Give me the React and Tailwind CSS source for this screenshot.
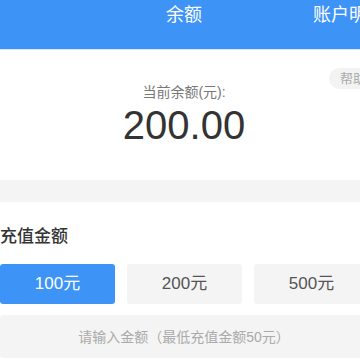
import React, { useState } from 'react';

const amounts = ['100元', '200元', '500元'];

export default function App() {
    const [picked, setPicked] = useState(0);

    return (
        <div className="w-[360px] h-[360px] overflow-hidden bg-white font-['Liberation_Sans','Noto_Sans_CJK_SC',sans-serif]">
            <div className="w-[368px]">
                {/* header */}
                <div className="relative h-[50px] bg-[#3d94f6] border-b border-[#d8e9fd] flex items-start justify-center">
                    <span className="mt-[4px] text-[18px] leading-[22px] text-white">余额</span>
                    <span className="absolute left-[313px] top-[4px] whitespace-nowrap text-[18px] leading-[22px] text-white">账户明细</span>
                </div>

                {/* balance */}
                <div className="relative h-[130px] flex flex-col items-center">
                    <span className="absolute left-[329px] top-[18px] h-[21px] pl-[11px] pr-3 rounded-full bg-[#f3f3f3] text-[13px] leading-[21px] text-[#aaa] whitespace-nowrap">帮助中心</span>
                    <p className="mt-[33px] text-[14px] leading-[18px] text-[#777]">当前余额(元):</p>
                    <p className="mt-[1px] text-[40px] leading-[46px] text-[#333]">200.00</p>
                </div>

                <div className="h-[22px] bg-[#f4f4f4]" />

                {/* recharge */}
                <div className="pt-[24px]">
                    <h3 className="text-[17px] leading-[22px] font-medium text-[#333]">充值金额</h3>
                    <div className="mt-[16px] grid grid-cols-3 gap-[12px] w-[369px]">
                        {amounts.map((a, i) => (
                            <button
                                key={a}
                                onClick={() => setPicked(i)}
                                className={`h-[40px] rounded-[3px] text-[17px] ${picked === i ? 'bg-[#3d94f6] text-white' : 'bg-[#f4f4f4] text-[#555]'}`}
                            >
                                {a}
                            </button>
                        ))}
                    </div>
                    <input
                        className="mt-[11px] h-[43px] w-full rounded-[3px] bg-[#f4f4f4] text-center text-[14px] outline-none placeholder:text-[#aaa]"
                        placeholder="请输入金额（最低充值金额50元）"
                    />
                </div>
            </div>
        </div>
    );
}
